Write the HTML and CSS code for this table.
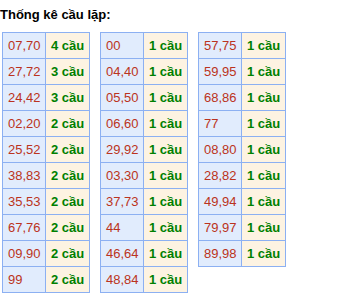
FILE: index.html
```html
<!DOCTYPE html>
<html>
<head>
<meta charset="utf-8">
<link rel="stylesheet" href="styles.css">
</head>
<body>
<div class="page">
  <div class="title">Thống kê cầu lặp:</div>
  <div class="tables">
    <table class="stat">
      <tr><td class="num">07,70</td><td class="cnt">4 cầu</td></tr>
      <tr><td class="num">27,72</td><td class="cnt">3 cầu</td></tr>
      <tr><td class="num">24,42</td><td class="cnt">3 cầu</td></tr>
      <tr><td class="num">02,20</td><td class="cnt">2 cầu</td></tr>
      <tr><td class="num">25,52</td><td class="cnt">2 cầu</td></tr>
      <tr><td class="num">38,83</td><td class="cnt">2 cầu</td></tr>
      <tr><td class="num">35,53</td><td class="cnt">2 cầu</td></tr>
      <tr><td class="num">67,76</td><td class="cnt">2 cầu</td></tr>
      <tr><td class="num">09,90</td><td class="cnt">2 cầu</td></tr>
      <tr><td class="num">99</td><td class="cnt">2 cầu</td></tr>
    </table>
    <table class="stat">
      <tr><td class="num">00</td><td class="cnt">1 cầu</td></tr>
      <tr><td class="num">04,40</td><td class="cnt">1 cầu</td></tr>
      <tr><td class="num">05,50</td><td class="cnt">1 cầu</td></tr>
      <tr><td class="num">06,60</td><td class="cnt">1 cầu</td></tr>
      <tr><td class="num">29,92</td><td class="cnt">1 cầu</td></tr>
      <tr><td class="num">03,30</td><td class="cnt">1 cầu</td></tr>
      <tr><td class="num">37,73</td><td class="cnt">1 cầu</td></tr>
      <tr><td class="num">44</td><td class="cnt">1 cầu</td></tr>
      <tr><td class="num">46,64</td><td class="cnt">1 cầu</td></tr>
      <tr><td class="num">48,84</td><td class="cnt">1 cầu</td></tr>
    </table>
    <table class="stat">
      <tr><td class="num">57,75</td><td class="cnt">1 cầu</td></tr>
      <tr><td class="num">59,95</td><td class="cnt">1 cầu</td></tr>
      <tr><td class="num">68,86</td><td class="cnt">1 cầu</td></tr>
      <tr><td class="num">77</td><td class="cnt">1 cầu</td></tr>
      <tr><td class="num">08,80</td><td class="cnt">1 cầu</td></tr>
      <tr><td class="num">28,82</td><td class="cnt">1 cầu</td></tr>
      <tr><td class="num">49,94</td><td class="cnt">1 cầu</td></tr>
      <tr><td class="num">79,97</td><td class="cnt">1 cầu</td></tr>
      <tr><td class="num">89,98</td><td class="cnt">1 cầu</td></tr>
    </table>
  </div>
</div>
</body>
</html>
```
FILE: styles.css
```css
html, body {
  margin: 0;
  padding: 0;
  background: #ffffff;
}
.page {
  font-family: "Liberation Sans", Arial, sans-serif;
  padding-top: 7px;
}
.title {
  font-size: 13px;
  font-weight: bold;
  line-height: 15px;
  color: #000;
}
.tables {
  display: flex;
  align-items: flex-start;
  gap: 10px;
  margin-top: 10px;
  padding-left: 2px;
}
.stat {
  border-collapse: collapse;
  border: 1px solid #8cb0f2;
  font-size: 13px;
}
.stat td {
  border: 1px solid #8cb0f2;
  height: 26px;
  padding: 0 0 0 5px;
  box-sizing: border-box;
  vertical-align: middle;
  line-height: 15px;
}
.num {
  width: 43px;
  min-width: 43px;
  background: #e1ecfd;
  color: #bb3320;
}
.cnt {
  width: 44px;
  min-width: 44px;
  background: #fdf3e2;
  color: #008000;
  font-weight: bold;
}
```
